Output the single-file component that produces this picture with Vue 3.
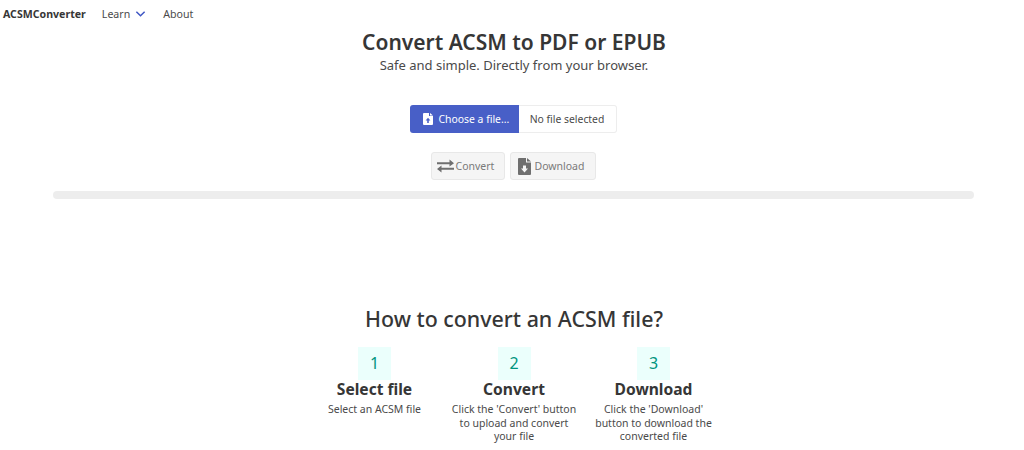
<script setup>
const steps = [
  { num: 1, title: 'Select file', text: 'Select an ACSM file' },
  { num: 2, title: 'Convert', text: "Click the 'Convert' button to upload and convert your file" },
  { num: 3, title: 'Download', text: "Click the 'Download' button to download the converted file" }
]
</script>

<template>
  <div class="page">
    <nav class="navbar">
      <span class="brand">ACSMConverter</span>
      <span class="nav-item learn">
        Learn
        <svg width="11" height="8" viewBox="0 0 12 8"><path d="M1.5 1.5 6 6l4.5-4.5" fill="none" stroke="#3e56c4" stroke-width="1.6" /></svg>
      </span>
      <span class="nav-item">About</span>
    </nav>

    <header class="hero">
      <h1>Convert ACSM to PDF or EPUB</h1>
      <p>Safe and simple. Directly from your browser.</p>
    </header>

    <div class="file-box">
      <span class="file-cta">
        <svg width="10" height="12" viewBox="0 0 10 12"><path d="M0 1a1 1 0 0 1 1-1h5v3h4v8a1 1 0 0 1-1 1H1a1 1 0 0 1-1-1z M7 0l3 2.5H7z M5 4.8 2.6 7.4h1.6V10h1.6V7.4h1.6z" fill="#fff" fill-rule="evenodd" /></svg>
        Choose a file...
      </span>
      <span class="file-name">No file selected</span>
    </div>

    <div class="actions">
      <button class="btn convert" disabled>
        <svg width="17" height="14" viewBox="0 0 17 14"><path d="M0 3.2h12.5V.6L17 4.2l-4.5 3.4V5.2H0z M17 8.8H4.5V6.4L0 10l4.5 3.4v-2.6H17z" fill="#6f6f6f" /></svg>
        Convert
      </button>
      <button class="btn download" disabled>
        <svg width="13" height="17" viewBox="0 0 13 17"><path d="M0 1a1 1 0 0 1 1-1h7v4.5h5V16a1 1 0 0 1-1 1H1a1 1 0 0 1-1-1z M9 0l4 3.5H9z M6.5 14.5 10 10.5H8V7.5H5v3H3z" fill="#6f6f6f" fill-rule="evenodd" /></svg>
        Download
      </button>
    </div>

    <div class="progress"></div>

    <section class="how">
      <h2>How to convert an ACSM file?</h2>
      <div class="steps">
        <div v-for="step in steps" :key="step.num" class="step">
          <div class="num">{{ step.num }}</div>
          <h3>{{ step.title }}</h3>
          <p>{{ step.text }}</p>
        </div>
      </div>
    </section>
  </div>
</template>

<style scoped>
.page {
  width: 1024px;
  height: 450px;
  overflow: hidden;
  box-sizing: border-box;
  padding-left: 2px;
  background: #fff;
  color: #4a4a4a;
  font-family: "Noto Sans", "Open Sans", sans-serif;
  display: flex;
  flex-direction: column;
  align-items: center;
}
.navbar {
  align-self: stretch;
  display: flex;
  align-items: center;
  gap: 16px;
  height: 27px;
  margin-left: -2px;
  padding-left: 3px;
  font-size: 10.6px;
}
.brand { font-weight: 700; color: #363636; }
.nav-item { color: #4a4a4a; }
.learn { display: flex; align-items: center; gap: 5px; margin-right: 1px; }
.hero { text-align: center; padding: 1px 0 0 2px; }
h1 {
  margin: 0;
  font-size: 21px;
  line-height: 28px;
  font-weight: 600;
  color: #363636;
}
.hero p { margin: 0; font-size: 13px; line-height: 18px; }
.file-box {
  display: flex;
  height: 28px;
  margin-top: 31px;
  font-size: 10.4px;
}
.file-cta {
  width: 109px;
  display: flex;
  align-items: center;
  gap: 6px;
  padding-left: 13px;
  box-sizing: border-box;
  background: #485fc7;
  color: #fff;
  border-radius: 3px 0 0 3px;
}
.file-name {
  width: 98px;
  display: flex;
  align-items: center;
  justify-content: center;
  box-sizing: border-box;
  border: 1px solid #ededed;
  border-left: 0;
  border-radius: 0 3px 3px 0;
  color: #4a4a4a;
}
.actions { display: flex; gap: 5px; margin-top: 19px; }
.btn {
  height: 28px;
  display: flex;
  align-items: center;
  gap: 2px;
  box-sizing: border-box;
  background: #f5f5f5;
  border: 1px solid #e8e8e8;
  border-radius: 3px;
  font: inherit;
  font-size: 10.5px;
  color: #7a7a7a;
}
.convert { width: 74px; padding: 0 5px; }
.download { width: 86px; padding: 0 7px; gap: 4px; }
.progress {
  width: 921px;
  height: 8px;
  margin-top: 11px;
  background: #ededed;
  border-radius: 4px;
}
.how { margin-top: 106px; text-align: center; padding-left: 2px; }
h2 {
  margin: 0;
  font-size: 21.4px;
  line-height: 28px;
  font-weight: 500;
  color: #363636;
}
.steps {
  display: flex;
  justify-content: center;
  margin-top: 14px;
  gap: 13.5px;
}
.step { width: 126px; }
.num {
  width: 33px;
  height: 33px;
  margin: 0 auto;
  background: #ebfffc;
  color: #00947e;
  font-size: 16px;
  line-height: 33px;
}
h3 {
  margin: 0;
  font-size: 15.6px;
  line-height: 19px;
  font-weight: 700;
  color: #363636;
}
.step p { margin: 4px 0 0; font-size: 10.5px; line-height: 13.5px; }
</style>
